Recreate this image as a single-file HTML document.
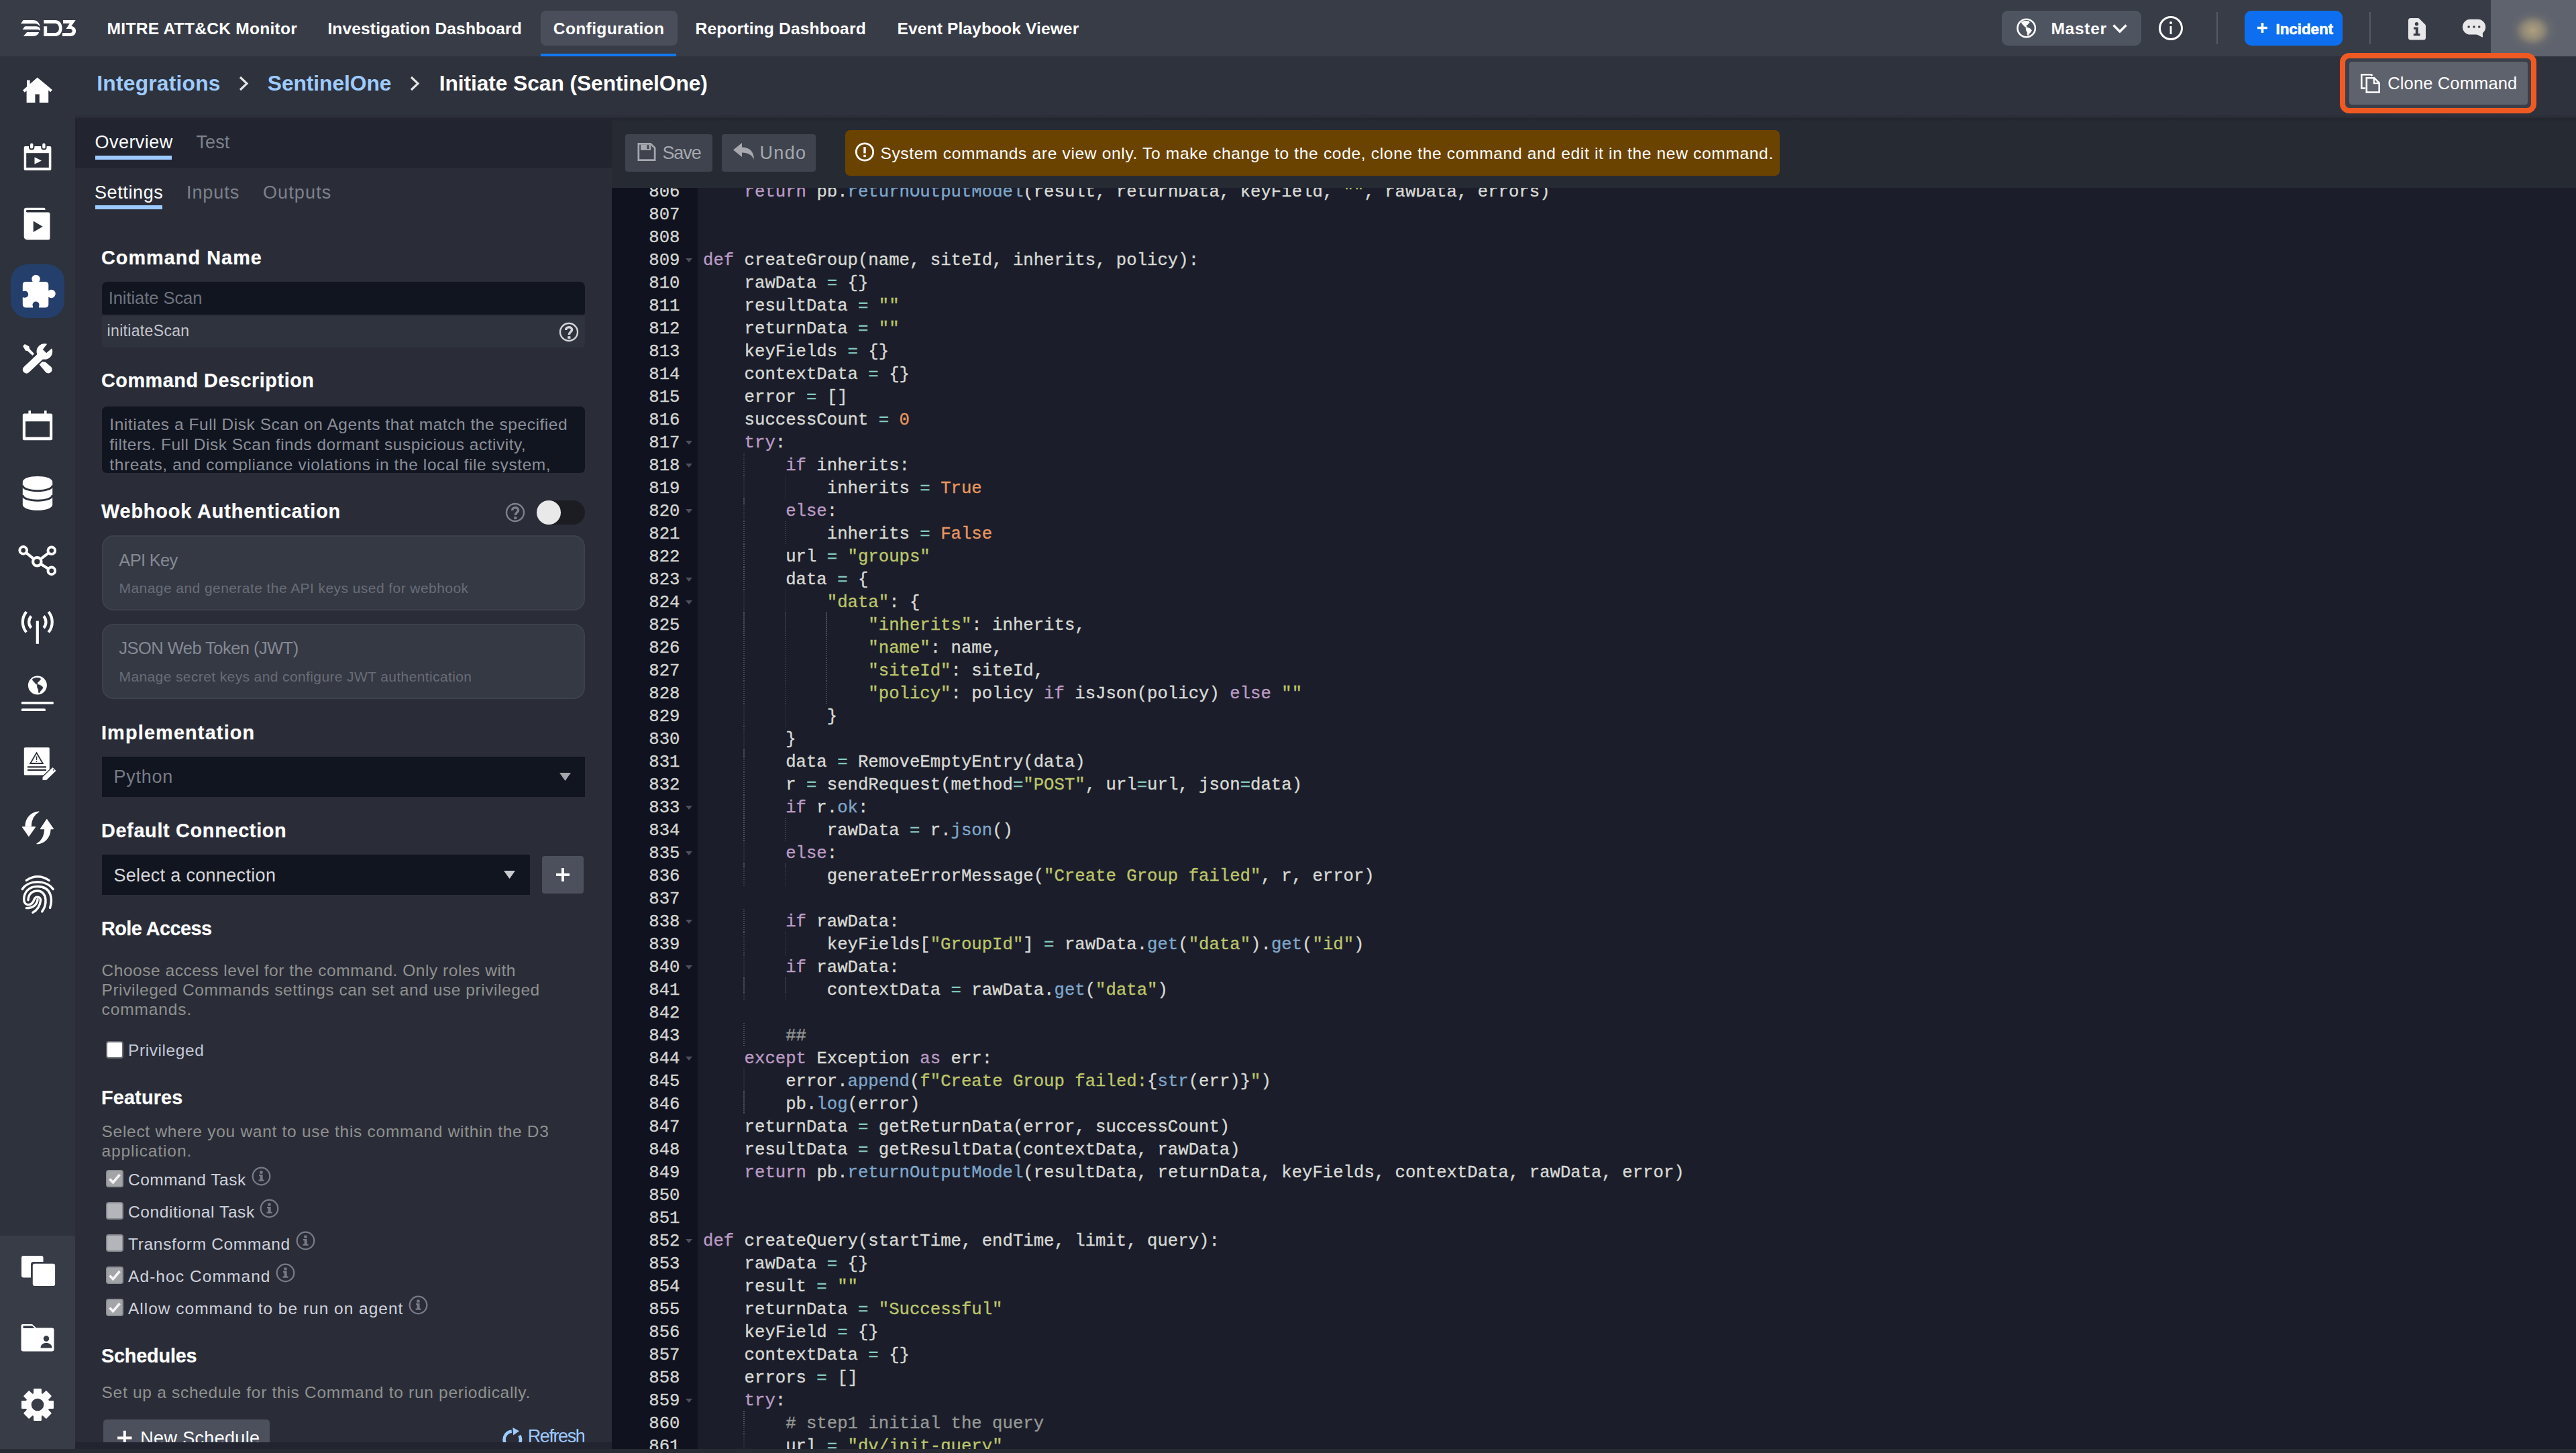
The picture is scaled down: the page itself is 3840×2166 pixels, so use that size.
<!DOCTYPE html>
<html lang="en"><head><meta charset="utf-8"><title>Initiate Scan (SentinelOne) - D3</title>
<style>
html,body{margin:0;padding:0;width:3840px;height:2166px;overflow:hidden;background:#2e323c}
body{position:relative;font-family:'Liberation Sans',sans-serif}
.a{position:absolute}
.t{position:absolute;white-space:pre;line-height:1;font-family:'Liberation Sans',sans-serif}

#ed{position:absolute;left:912px;top:280px;width:2928px;height:1880px;overflow:hidden;font-family:'Liberation Mono',monospace;font-size:25.66px;color:#d8d9d5;-webkit-text-stroke:0.35px}
.ln{position:absolute;left:0;width:2928px;height:34px;line-height:34px;white-space:pre}
.ln b{position:absolute;left:0;width:101.500px;text-align:right;font-weight:400;color:#d4d5d1}
.ln code{position:absolute;left:136px;font-family:inherit;font-size:inherit}
#ed .fd{position:absolute;left:110px;top:13px;width:0;height:0;border-left:5px solid transparent;border-right:5px solid transparent;border-top:6px solid #4e515c}
.ig{position:absolute;top:-2.800px;width:1.500px;height:34px;background:repeating-linear-gradient(#4a4d57 0 1.500px,transparent 1.500px 3px)}
.k{color:#bb9ac4}.s{color:#bdc56a}.n{color:#e8965f}.f{color:#7fa6cb}.o{color:#86c9be}.c{color:#969896}

</style></head><body>
<div class="a" style="left:0px;top:0px;width:3840px;height:84px;background:#383c47;"></div><div class="a" style="left:0px;top:84px;width:3840px;height:92px;background:#2e323c;"></div><div class="a" style="left:0px;top:176px;width:112px;height:1990px;background:#2e323c;"></div><div class="a" style="left:0px;top:1842px;width:112px;height:318px;background:#383c47;"></div><div class="a" style="left:112px;top:176px;width:800px;height:74px;background:#222530;"></div><div class="a" style="left:112px;top:250px;width:800px;height:1900px;background:#2a2d38;"></div><div class="a" style="left:112px;top:2150px;width:3728px;height:10px;background:#222530;"></div><div class="a" style="left:912px;top:176px;width:2928px;height:104px;background:#262a33;"></div><div class="a" style="left:912px;top:280px;width:128px;height:1880px;background:#10131f;"></div><div class="a" style="left:1040px;top:280px;width:2800px;height:1880px;background:#1b1e2a;"></div><div class="a" style="left:0px;top:2160px;width:3840px;height:6px;background:#272b34;"></div><div class="a" style="left:112px;top:170px;width:3728px;height:6px;background:linear-gradient(rgba(0,0,0,0),rgba(0,0,0,.13))"></div><div class="a" style="left:912px;top:176px;width:2928px;height:5px;background:linear-gradient(rgba(0,0,0,.12),rgba(0,0,0,0))"></div><svg class="a" style="left:28px;top:28px;" width="88" height="28" viewBox="28 28 88 28"><g fill="#fff"><path d="M34.700 30H49.900C55 30 59 34 59.700 39.600 57.500 36.500 55 35.200 52.500 35.200H30.900z"/><path d="M37.100 39.200H52.500C56.500 39.200 59.500 40.500 59.900 43.300L59.300 45.700C58 44.500 56.500 44.100 54.200 44.100H33.500z"/><path d="M40.100 48H58.200C57 51.500 54 53.900 49.900 53.900H34.900z"/><path d="M65.300 30H82C89 30 92.600 35 92.600 42S89 53.900 82 53.900H65.300V39.200H70.200V49H81.500C85.500 49 87.900 46.500 87.900 42S85.500 34.900 81.500 34.900H65.300z"/><path d="M94.100 30H112.700L106.500 38.800C111 40 113.100 42.500 113.100 46 113.100 51 110 53.900 105 53.900H93V49H104.500C106.800 49 107.800 47.800 107.800 46S106.500 42.900 104.500 42.900H98.400L103.800 34.900H94.100z"/></g></svg><div class="a" style="left:806px;top:16px;width:204px;height:52px;background:#4a4e5a;border-radius:8px;"></div><div class="a" style="left:806px;top:80px;width:202px;height:4px;background:#1079f0;"></div><div class="a" style="left:2984px;top:16px;width:208px;height:52px;background:#4f5461;border-radius:9px;"></div><svg class="a" style="left:3148px;top:34px;" width="24" height="16" viewBox="0 0 24 16"><path d="M2.500 3.500 12 13l9.500-9.500" fill="none" stroke="#fff" stroke-width="3.400"/></svg><svg class="a" style="left:3216px;top:22px;" width="40" height="40" viewBox="0 0 40 40"><circle cx="20" cy="20" r="16.500" fill="none" stroke="#fff" stroke-width="3"/><rect x="18.600" y="17" width="2.800" height="12" fill="#fff"/><circle cx="20" cy="12" r="2" fill="#fff"/></svg><div class="a" style="left:3304px;top:18px;width:2px;height:48px;background:#545968;"></div><div class="a" style="left:3346px;top:16px;width:146px;height:52px;background:#0d6ff0;border-radius:10px;"></div><svg class="a" style="left:3364px;top:33px;" width="17" height="17" viewBox="0 0 17 17"><path d="M8.500 1v15M1 8.500h15" stroke="#fff" stroke-width="3.600"/></svg><div class="a" style="left:3532px;top:18px;width:2px;height:48px;background:#545968;"></div><div class="a" style="left:3713px;top:0px;width:127px;height:84px;background:#5f636d;overflow:hidden"></div><div class="a" style="left:3725px;top:0px;width:100px;height:84px;background:radial-gradient(ellipse 36px 31px at 50.500% 54%,rgba(178,162,128,.95) 0%,rgba(164,151,123,.75) 38%,rgba(122,120,116,.3) 72%,rgba(95,99,109,0) 100%)"></div><svg class="a" style="left:354.8px;top:112px;" width="18.0" height="25" viewBox="0 0 18.0 25"><path d="M3 3l10 9.500L3 22" fill="none" stroke="#e4e4e6" stroke-width="3.200"/></svg><svg class="a" style="left:609.5px;top:112px;" width="18.0" height="25" viewBox="0 0 18.0 25"><path d="M3 3l10 9.500L3 22" fill="none" stroke="#e4e4e6" stroke-width="3.200"/></svg><div class="a" style="left:3488px;top:79px;width:293px;height:90px;box-sizing:border-box;border:8.500px solid #f05a22;border-radius:14px;background:#3c3f4a"></div><div class="a" style="left:3502px;top:92px;width:266px;height:64px;background:#5e626d;border-radius:4px;"></div><div class="a" style="left:142px;top:232px;width:114px;height:6px;background:#9ecbff;"></div><div class="a" style="left:142px;top:306px;width:100px;height:6px;background:#9ecbff;"></div><div class="a" style="left:152px;top:420px;width:720px;height:49px;background:#111520;border-radius:8px 8px 3px 3px;"></div><div class="a" style="left:152px;top:471px;width:720px;height:47px;background:#2f333e;border-radius:2px 2px 6px 6px;"></div><svg class="a" style="left:833px;top:480px;" width="30" height="30" viewBox="0 0 30 30"><circle cx="15" cy="15" r="13" fill="none" stroke="#d4d5d9" stroke-width="2.400"/><path d="M10.600 12c0-2.700 2-4.200 4.500-4.200s4.500 1.500 4.500 3.800c0 3.200-4.300 3.300-4.300 7.400" fill="none" stroke="#d4d5d9" stroke-width="3.500"/><rect x="13.200" y="21.200" width="4.200" height="3.700" fill="#d4d5d9"/></svg><div class="a" style="left:152px;top:606px;width:720px;height:99px;background:#111520;border-radius:7px;overflow:hidden"></div><svg class="a" style="left:753px;top:749px;" width="30" height="30" viewBox="0 0 30 30"><circle cx="15" cy="15" r="13" fill="none" stroke="#7d818c" stroke-width="2.400"/><path d="M10.600 12c0-2.700 2-4.200 4.500-4.200s4.500 1.500 4.500 3.800c0 3.200-4.300 3.300-4.300 7.400" fill="none" stroke="#7d818c" stroke-width="3.500"/><rect x="13.200" y="21.200" width="4.200" height="3.700" fill="#7d818c"/></svg><div class="a" style="left:800px;top:746px;width:72px;height:36px;background:#1b1d23;border-radius:18px;"></div><div class="a" style="left:800px;top:746px;width:36px;height:36px;border-radius:18px;background:#e9e9ea"></div><div class="a" style="left:152px;top:798px;width:720px;height:112px;box-sizing:border-box;border:2px solid #3d414c;border-radius:17px;background:#353944"></div><div class="a" style="left:152px;top:930px;width:720px;height:112px;box-sizing:border-box;border:2px solid #3d414c;border-radius:17px;background:#353944"></div><div class="a" style="left:152px;top:1128px;width:720px;height:60px;background:#111520;"></div><svg class="a" style="left:834px;top:1152px;" width="17" height="12" viewBox="0 0 17 12"><path d="M0 0h17L8.500 12z" fill="#a4a6ab"/></svg><div class="a" style="left:152px;top:1274px;width:638px;height:60px;background:#111520;"></div><svg class="a" style="left:751px;top:1298px;" width="17" height="12" viewBox="0 0 17 12"><path d="M0 0h17L8.500 12z" fill="#c9cacd"/></svg><div class="a" style="left:808px;top:1276px;width:62px;height:56px;background:#4c505c;border-radius:4px;"></div><svg class="a" style="left:828px;top:1293px;" width="22" height="22" viewBox="0 0 22 22"><path d="M11 1v20M1 11h20" stroke="#fff" stroke-width="4"/></svg><div class="a" style="left:158px;top:1552px;width:26px;height:26px;box-sizing:border-box;border:2px solid #6b6d75;border-radius:4px;background:#fff"></div><div class="a" style="left:158px;top:1744px;width:26px;height:26px;box-sizing:border-box;border:2px solid #8e8f94;border-radius:4px;background:#a3a4a8"></div><svg class="a" style="left:158px;top:1744px;" width="26" height="26" viewBox="0 0 26 26"><path d="M5.500 13.500l5 5.200L20.500 7" fill="none" stroke="#f4f4f5" stroke-width="3.600"/></svg><svg class="a" style="left:374.5px;top:1739.4px;" width="29.0" height="29.0" viewBox="0 0 29.0 29.0"><circle cx="14.500" cy="14.500" r="12.800" fill="none" stroke="#777b88" stroke-width="2.300"/><path d="M11 12h5.600v7.400h2v2.300h-8v-2.300h2.100v-5.100H11z" fill="#777b88"/><rect x="12.300" y="6.600" width="4.300" height="4.100" rx="1" fill="#777b88"/></svg><div class="a" style="left:158px;top:1792px;width:26px;height:26px;box-sizing:border-box;border:2px solid #8a8b91;border-radius:4px;background:#b4b5ba"></div><svg class="a" style="left:387.0px;top:1787.4px;" width="29.0" height="29.0" viewBox="0 0 29.0 29.0"><circle cx="14.500" cy="14.500" r="12.800" fill="none" stroke="#777b88" stroke-width="2.300"/><path d="M11 12h5.600v7.400h2v2.300h-8v-2.300h2.100v-5.100H11z" fill="#777b88"/><rect x="12.300" y="6.600" width="4.300" height="4.100" rx="1" fill="#777b88"/></svg><div class="a" style="left:158px;top:1840px;width:26px;height:26px;box-sizing:border-box;border:2px solid #8a8b91;border-radius:4px;background:#b4b5ba"></div><svg class="a" style="left:440.5px;top:1835.4px;" width="29.0" height="29.0" viewBox="0 0 29.0 29.0"><circle cx="14.500" cy="14.500" r="12.800" fill="none" stroke="#777b88" stroke-width="2.300"/><path d="M11 12h5.600v7.400h2v2.300h-8v-2.300h2.100v-5.100H11z" fill="#777b88"/><rect x="12.300" y="6.600" width="4.300" height="4.100" rx="1" fill="#777b88"/></svg><div class="a" style="left:158px;top:1888px;width:26px;height:26px;box-sizing:border-box;border:2px solid #8e8f94;border-radius:4px;background:#a3a4a8"></div><svg class="a" style="left:158px;top:1888px;" width="26" height="26" viewBox="0 0 26 26"><path d="M5.500 13.500l5 5.200L20.500 7" fill="none" stroke="#f4f4f5" stroke-width="3.600"/></svg><svg class="a" style="left:410.8px;top:1883.4px;" width="29.0" height="29.0" viewBox="0 0 29.0 29.0"><circle cx="14.500" cy="14.500" r="12.800" fill="none" stroke="#777b88" stroke-width="2.300"/><path d="M11 12h5.600v7.400h2v2.300h-8v-2.300h2.100v-5.100H11z" fill="#777b88"/><rect x="12.300" y="6.600" width="4.300" height="4.100" rx="1" fill="#777b88"/></svg><div class="a" style="left:158px;top:1936px;width:26px;height:26px;box-sizing:border-box;border:2px solid #8e8f94;border-radius:4px;background:#a3a4a8"></div><svg class="a" style="left:158px;top:1936px;" width="26" height="26" viewBox="0 0 26 26"><path d="M5.500 13.500l5 5.200L20.500 7" fill="none" stroke="#f4f4f5" stroke-width="3.600"/></svg><svg class="a" style="left:608.7px;top:1931.4px;" width="29.0" height="29.0" viewBox="0 0 29.0 29.0"><circle cx="14.500" cy="14.500" r="12.800" fill="none" stroke="#777b88" stroke-width="2.300"/><path d="M11 12h5.600v7.400h2v2.300h-8v-2.300h2.100v-5.100H11z" fill="#777b88"/><rect x="12.300" y="6.600" width="4.300" height="4.100" rx="1" fill="#777b88"/></svg><svg class="a" style="left:112px;top:2100px;" width="800" height="50" viewBox="112 2100 800 50"><rect x="154" y="2116" width="248" height="60" rx="5" fill="#4c505c"/><path d="M185.800 2132.700v21.400M175.100 2143.400h21.400" stroke="#fff" stroke-width="4"/><g transform="translate(763.800 2145.900)"><path d="M-1.060 -12.150A12.200 12.200 0 1 0 10.570 -6.100" fill="none" stroke="#9ecbff" stroke-width="4.600"/><path d="M0.500 -18 10.300 -12.600 1.400 -6.500z" fill="#9ecbff"/></g></svg><div class="a" style="left:932px;top:200px;width:130px;height:56px;background:#3e434e;border-radius:4px;"></div><svg class="a" style="left:950px;top:213px;" width="28" height="27" viewBox="0 0 30 30"><path d="M1.500 1.500h20l7 7v20h-27z" fill="none" stroke="#a6a8ae" stroke-width="3"/><path d="M5 3h17v9H5z" fill="#a6a8ae"/><rect x="15.500" y="3.500" width="3.400" height="6.500" fill="#3e434e"/></svg><div class="a" style="left:1076px;top:200px;width:140px;height:56px;background:#3e434e;border-radius:4px;"></div><svg class="a" style="left:1093px;top:213px;" width="32" height="26" viewBox="0 0 32 26"><path d="M0 10.500 13 0v6.500c11 0 18 6 18 18.500C28 18 22 14.500 13 14.500V21z" fill="#a6a8ae"/></svg><div class="a" style="left:1260px;top:194px;width:1393px;height:68px;background:#6b4300;border-radius:7px;"></div><svg class="a" style="left:1273px;top:210px;" width="32" height="32" viewBox="0 0 32 32"><circle cx="16" cy="16.500" r="12.700" fill="none" stroke="#fff" stroke-width="2.800"/><rect x="14.300" y="9" width="3.400" height="9.500" fill="#fff"/><rect x="14.300" y="20.800" width="3.400" height="3.400" fill="#fff"/></svg><svg class="a" style="left:33px;top:114px;" width="46" height="40" viewBox="0 0 46 40"><g fill="#fff"><path d="M1 20.500 22.700 1.500 45 20l-2.800 3.200L22.700 6.800 3.800 23.700z"/><path d="M6.600 20 22.700 5.800 39.200 20v19H25.800V26.500h-6.400V39H6.600z"/><rect x="7" y="5.500" width="4.600" height="11"/></g></svg><svg class="a" style="left:35px;top:213px;" width="43" height="42" viewBox="0 0 43 42"><g><rect x="0.700" y="5" width="40.700" height="36" rx="2" fill="#fff"/><rect x="4.200" y="15.200" width="33.600" height="21.600" fill="#2e323c"/><path d="M16.500 21.200v10.600l10.500-5.300z" fill="#fff"/><rect x="8" y="0" width="8.400" height="10.500" rx="4" fill="#2e323c"/><rect x="26.200" y="0" width="8.400" height="10.500" rx="4" fill="#2e323c"/><rect x="10" y="0.500" width="4.400" height="8" rx="2.200" fill="#fff"/><rect x="28.200" y="0.500" width="4.400" height="8" rx="2.200" fill="#fff"/></g></svg><svg class="a" style="left:35px;top:309px;" width="41" height="50" viewBox="0 0 41 50"><g><path d="M4 .8h26.500a2 2 0 0 1 2 2V4H5.500a1.600 1.600 0 0 0 0 3.400H37a2.500 2.500 0 0 1 2.500 2.500v36a2.500 2.500 0 0 1-2.500 2.500H5.200A4.500 4.500 0 0 1 .7 44V4.500A3.500 3.500 0 0 1 4 .8z" fill="#fff"/><path d="M14.700 20.500v16.500l14-8.300z" fill="#2e323c"/></g></svg><div class="a" style="left:16px;top:394px;width:80px;height:80px;background:#243f6b;border-radius:25px;"></div><svg class="a" style="left:33px;top:409px;" width="50" height="50" viewBox="0 0 50 50"><g fill="#fff"><rect x=".8" y="11" width="38.500" height="38.500" rx="4.500"/><circle cx="20.500" cy="7" r="6.200"/><rect x="15.800" y="7" width="9.400" height="6"/><circle cx="43.500" cy="29" r="6.200"/><rect x="38" y="24.300" width="6" height="9.400"/></g><g fill="#243f6b"><circle cx="4.200" cy="29.800" r="5"/><rect x="0" y="25.300" width="4" height="9"/><circle cx="20.500" cy="45.600" r="5"/><rect x="16" y="46" width="9" height="4"/></g></svg><svg class="a" style="left:16px;top:494px;" width="80" height="80" viewBox="0 0 1453 1453"><g fill="#fff"><path d="M425 1035 790 690" stroke="#fff" stroke-width="205" stroke-linecap="round"/><circle cx="915" cy="545" r="215"/><path d="M1010 310 868 490 965 587 1150 425 1230 280z" fill="#2e323c"/><path d="M380 345 500 410 510 470 635 605 590 655 450 525 400 520 330 400z"/><path d="M775 900 850 820 940 830 1090 960A100 100 0 0 1 945 1105z"/></g></svg><svg class="a" style="left:33px;top:611px;" width="46" height="46" viewBox="0 0 46 46"><rect x=".8" y="5.500" width="44.400" height="39.700" rx="2.500" fill="#fff"/><rect x="5" y="17.200" width="36" height="23.300" fill="#2e323c"/><rect x="9.400" y="1" width="3.600" height="6" fill="#fff"/><rect x="33" y="1" width="3.600" height="6" fill="#fff"/></svg><svg class="a" style="left:33px;top:709px;" width="46" height="53" viewBox="0 0 46 53"><g fill="#fff"><path d="M.8 9.300C.8 4.500 10.700 1 23 1s22.200 3.500 22.200 8.300v34.200c0 4.800-9.900 8.300-22.200 8.300S.8 48.300.8 43.500z"/></g><g fill="none" stroke="#2e323c" stroke-width="3"><path d="M.8 14.500c0 4.800 9.900 8.300 22.200 8.300s22.200-3.500 22.200-8.300"/><path d="M.8 29c0 4.800 9.900 8.300 22.200 8.300S45.200 33.800 45.200 29"/></g></svg><svg class="a" style="left:26px;top:811px;" width="60" height="50" viewBox="0 0 60 50"><g stroke="#fff" fill="none"><path d="M8.700 9.400 29.300 26.300 50.800 9.800M29.300 26.300l21.500 13.600" stroke-width="4.200"/><circle cx="8.700" cy="9.400" r="5.300" stroke-width="4" fill="#2e323c"/><circle cx="50.800" cy="9.800" r="5.300" stroke-width="4" fill="#2e323c"/><circle cx="50.800" cy="39.900" r="5.300" stroke-width="4" fill="#2e323c"/><circle cx="29.300" cy="26.300" r="6.200" stroke-width="4.200" fill="#2e323c"/></g></svg><svg class="a" style="left:30px;top:908px;" width="52" height="54" viewBox="0 0 52 54"><g fill="none" stroke="#fff" stroke-width="4.200"><path d="M25.800 17.600v34.200" stroke-width="4.200"/><path d="M16.500 10.500a13 13 0 0 0 0 17.500"/><path d="M35.100 10.500a13 13 0 0 1 0 17.500"/><path d="M9.300 4a24 24 0 0 0 0 30.500"/><path d="M42.300 4a24 24 0 0 1 0 30.500"/></g></svg><svg class="a" style="left:30px;top:1006px;" width="52" height="56" viewBox="0 0 52 56"><circle cx="25.900" cy="15.600" r="14" fill="#fff"/><path d="M18.4 6.3 23.2 4.5 29.3 4.9 30.8 6.3 28.7 8.8 26.9 10.7 25.0 11.9 26.2 13.1 25.4 14.4 23.2 13.1 21.3 10.7 19.2 8.8zM25.9 14.4 28.7 15.0 32.4 16.9 34.0 19.3 32.4 21.8 30.0 24.3 28.7 26.8 27.5 26.2 27.5 22.4 25.9 19.3 25.4 16.2z" fill="#2e323c" stroke="#2e323c" stroke-width="0.800" stroke-linejoin="round"/><rect x="1.700" y="40" width="48.300" height="3.800" rx="1.900" fill="#fff"/><rect x="1.700" y="50.300" width="36.400" height="3.800" rx="1.900" fill="#fff"/></svg><svg class="a" style="left:34px;top:1113px;" width="50" height="50" viewBox="0 0 50 50"><rect x="1.800" y="1.200" width="38" height="41.300" rx="1.500" fill="#fff"/><path d="M20.500 9.200 29.800 25H11.200z" fill="none" stroke="#2e323c" stroke-width="1.800"/><rect x="19.800" y="14.500" width="1.500" height="5.500" fill="#2e323c"/><rect x="19.800" y="21.300" width="1.500" height="1.600" fill="#2e323c"/><path d="M7 30.300h28M7 34.900h28" stroke="#2e323c" stroke-width="2.300"/><path d="M29.500 45.500 44.500 31l5 5L34.500 50.500h-5z" fill="#fff" stroke="#2e323c" stroke-width="2.600"/><path d="M29.500 45.500 44.500 31l5 5L34.500 50.500h-5z" fill="#fff"/><circle cx="45.700" cy="34.700" r="1" fill="#2e323c"/></svg><svg class="a" style="left:30px;top:1208px;" width="54" height="52" viewBox="30 1208 54 52"><g fill="#fff" stroke="#fff" stroke-width="1.200" stroke-linejoin="round"><path d="M58 1210.100C48 1210.500 38.500 1218 37.900 1231.600H46.200C46.500 1222 51 1214 58 1210.100z"/><path d="M33.500 1232.800H52.400L42.900 1246.400z"/><path d="M69.800 1221.500 79.400 1235.600H60.500z"/><path d="M55 1257.800C65 1257.500 74.500 1250 75.100 1236H66.800C66.500 1246 62 1254 55 1257.800z"/></g></svg><svg class="a" style="left:20px;top:1295px;" width="80" height="80" viewBox="0 0 1453 1453"><g fill="none" stroke="#fff" stroke-width="62" stroke-linecap="round"><path d="M350 315Q655 115 965 315"/><path d="M240 555C400 295 900 295 1075 555"/><path d="M990 1060C1060 850 1050 480 655 480 400 480 285 650 285 830 285 930 340 975 410 975 500 975 540 900 565 830 580 780 610 765 650 765 700 765 740 800 735 860 725 1000 640 1130 525 1185"/><path d="M775 1160C850 1060 880 940 870 830 860 690 770 600 655 600 500 600 400 700 400 850"/><path d="M655 830C650 900 620 960 570 1000 510 1045 430 1065 350 1065"/></g></svg><svg class="a" style="left:31px;top:1871px;" width="53" height="47" viewBox="0 0 53 47"><rect x="1" y="1" width="32.500" height="32.500" rx="3" fill="#fff"/><rect x="15" y="10" width="37.500" height="37.500" rx="4" fill="#383c47"/><rect x="17.800" y="12.800" width="33.300" height="33.300" rx="3" fill="#fff"/></svg><svg class="a" style="left:31px;top:1973px;" width="51" height="43" viewBox="0 0 51 43"><path d="M3 1h14l6 5.500h23.500a3 3 0 0 1 3 3v29a3 3 0 0 1-3 3H3.500a3 3 0 0 1-3-3V3.500A2.500 2.500 0 0 1 3 1z" fill="#fff"/><path d="M3.500 7h17l-3.500-3.500H3.500z" fill="#383c47"/><circle cx="38" cy="22.500" r="4.200" fill="#383c47"/><path d="M29.500 36.500c0-5 3.500-7.500 8.500-7.500s8.500 2.500 8.500 7.500z" fill="#383c47"/></svg><svg class="a" style="left:28px;top:2066px;" width="56" height="56" viewBox="0 0 56 56"><path d="M23.0 11.8 L23.1 5.0 L32.9 5.0 L33.0 11.8 L35.9 13.0 L40.8 8.3 L47.7 15.2 L43.0 20.1 L44.2 23.0 L51.0 23.1 L51.0 32.9 L44.2 33.0 L43.0 35.9 L47.7 40.8 L40.8 47.7 L35.9 43.0 L33.0 44.2 L32.9 51.0 L23.1 51.0 L23.0 44.2 L20.1 43.0 L15.2 47.7 L8.3 40.8 L13.0 35.9 L11.8 33.0 L5.0 32.9 L5.0 23.1 L11.8 23.0 L13.0 20.1 L8.3 15.2 L15.2 8.3 L20.1 13.0Z" fill="#fff" stroke="#fff" stroke-width="2" stroke-linejoin="round"/><circle cx="28" cy="28" r="9.3" fill="#383c47"/></svg><svg class="a" style="left:3005px;top:27px;" width="32" height="32" viewBox="0 0 32 32"><circle cx="15.700" cy="15" r="13.200" fill="none" stroke="#fff" stroke-width="2.600"/><g transform="translate(15.700 15) scale(0.960) translate(-25.900 -15.600)"><path d="M18.4 6.3 23.2 4.5 29.3 4.9 30.8 6.3 28.7 8.8 26.9 10.7 25.0 11.9 26.2 13.1 25.4 14.4 23.2 13.1 21.3 10.7 19.2 8.8zM25.9 14.4 28.7 15.0 32.4 16.9 34.0 19.3 32.4 21.8 30.0 24.3 28.7 26.8 27.5 26.2 27.5 22.4 25.9 19.3 25.4 16.2z" fill="#fff" stroke="#fff" stroke-width="0.800" stroke-linejoin="round"/></g></svg><svg class="a" style="left:3589px;top:26px;" width="29" height="34" viewBox="0 0 29 34"><path d="M4.500 1H15.500a3 3 0 0 1 2.100.900l8.500 8.500a3 3 0 0 1 .900 2.100V30a3.500 3.500 0 0 1-3.500 3.500h-19A3.500 3.500 0 0 1 1 30V4.500A3.500 3.500 0 0 1 4.500 1z" fill="#e8e8ea"/><circle cx="13.500" cy="9.700" r="2.700" fill="#383c47"/><path d="M9 14.500h6.800v9.500h2.700v3.200H8.800V24h3v-6.300H9z" fill="#383c47"/></svg><svg class="a" style="left:3670px;top:28px;" width="36" height="28" viewBox="0 0 36 28"><rect x=".900" y=".800" width="34.300" height="22.800" rx="11.400" fill="#e8e8ea"/><path d="M20.500 22.500 30.200 27.400c.5.200.9-.100.8-.700L30.800 17z" fill="#e8e8ea"/><circle cx="10.100" cy="12" r="1.800" fill="#383c47"/><circle cx="18" cy="12" r="1.800" fill="#383c47"/><circle cx="25.700" cy="12" r="1.800" fill="#383c47"/></svg><svg class="a" style="left:3518px;top:109px;" width="31" height="30" viewBox="0 0 31 30"><g fill="none" stroke="#fff" stroke-width="2.600"><path d="M8 22.500H2.300V2.300h14.500L18.500 4"/><path d="M9.800 7.300h11.500l7.400 7.400v13.800H9.800z" fill="#5e626d"/><path d="M20.800 7.500v7.700h7.700" stroke-width="2.200"/></g></svg>
<div id="ed"><div class="ln" style="top:-9.8px"><b>806</b><code>    <span class="k">return</span> pb.<span class="f">returnOutputModel</span>(result, returnData, keyField, <span class="s">""</span>, rawData, errors)</code></div>
<div class="ln" style="top:24.2px"><b>807</b><code></code></div>
<div class="ln" style="top:58.2px"><b>808</b><code></code></div>
<div class="ln" style="top:92.2px"><b>809</b><i class="fd"></i><code><span class="k">def</span> createGroup(name, siteId, inherits, policy):</code></div>
<div class="ln" style="top:126.2px"><b>810</b><code>    rawData <span class="o">=</span> {}</code></div>
<div class="ln" style="top:160.2px"><b>811</b><code>    resultData <span class="o">=</span> <span class="s">""</span></code></div>
<div class="ln" style="top:194.2px"><b>812</b><code>    returnData <span class="o">=</span> <span class="s">""</span></code></div>
<div class="ln" style="top:228.2px"><b>813</b><code>    keyFields <span class="o">=</span> {}</code></div>
<div class="ln" style="top:262.2px"><b>814</b><code>    contextData <span class="o">=</span> {}</code></div>
<div class="ln" style="top:296.2px"><b>815</b><code>    error <span class="o">=</span> []</code></div>
<div class="ln" style="top:330.2px"><b>816</b><code>    successCount <span class="o">=</span> <span class="n">0</span></code></div>
<div class="ln" style="top:364.2px"><b>817</b><i class="fd"></i><code>    <span class="k">try</span>:</code></div>
<div class="ln" style="top:398.2px"><b>818</b><i class="fd"></i><i class="ig" style="left:196.1px"></i><code>        <span class="k">if</span> inherits:</code></div>
<div class="ln" style="top:432.2px"><b>819</b><i class="ig" style="left:196.1px"></i><i class="ig" style="left:257.7px"></i><code>            inherits <span class="o">=</span> <span class="n">True</span></code></div>
<div class="ln" style="top:466.2px"><b>820</b><i class="fd"></i><i class="ig" style="left:196.1px"></i><code>        <span class="k">else</span>:</code></div>
<div class="ln" style="top:500.2px"><b>821</b><i class="ig" style="left:196.1px"></i><i class="ig" style="left:257.7px"></i><code>            inherits <span class="o">=</span> <span class="n">False</span></code></div>
<div class="ln" style="top:534.2px"><b>822</b><i class="ig" style="left:196.1px"></i><code>        url <span class="o">=</span> <span class="s">"groups"</span></code></div>
<div class="ln" style="top:568.2px"><b>823</b><i class="fd"></i><i class="ig" style="left:196.1px"></i><code>        data <span class="o">=</span> {</code></div>
<div class="ln" style="top:602.2px"><b>824</b><i class="fd"></i><i class="ig" style="left:196.1px"></i><i class="ig" style="left:257.7px"></i><code>            <span class="s">"data"</span>: {</code></div>
<div class="ln" style="top:636.2px"><b>825</b><i class="ig" style="left:196.1px"></i><i class="ig" style="left:257.7px"></i><i class="ig" style="left:319.3px"></i><code>                <span class="s">"inherits"</span>: inherits,</code></div>
<div class="ln" style="top:670.2px"><b>826</b><i class="ig" style="left:196.1px"></i><i class="ig" style="left:257.7px"></i><i class="ig" style="left:319.3px"></i><code>                <span class="s">"name"</span>: name,</code></div>
<div class="ln" style="top:704.2px"><b>827</b><i class="ig" style="left:196.1px"></i><i class="ig" style="left:257.7px"></i><i class="ig" style="left:319.3px"></i><code>                <span class="s">"siteId"</span>: siteId,</code></div>
<div class="ln" style="top:738.2px"><b>828</b><i class="ig" style="left:196.1px"></i><i class="ig" style="left:257.7px"></i><i class="ig" style="left:319.3px"></i><code>                <span class="s">"policy"</span>: policy <span class="k">if</span> isJson(policy) <span class="k">else</span> <span class="s">""</span></code></div>
<div class="ln" style="top:772.2px"><b>829</b><i class="ig" style="left:196.1px"></i><i class="ig" style="left:257.7px"></i><code>            }</code></div>
<div class="ln" style="top:806.2px"><b>830</b><i class="ig" style="left:196.1px"></i><code>        }</code></div>
<div class="ln" style="top:840.2px"><b>831</b><i class="ig" style="left:196.1px"></i><code>        data <span class="o">=</span> RemoveEmptyEntry(data)</code></div>
<div class="ln" style="top:874.2px"><b>832</b><i class="ig" style="left:196.1px"></i><code>        r <span class="o">=</span> sendRequest(method<span class="o">=</span><span class="s">"POST"</span>, url<span class="o">=</span>url, json<span class="o">=</span>data)</code></div>
<div class="ln" style="top:908.2px"><b>833</b><i class="fd"></i><i class="ig" style="left:196.1px"></i><code>        <span class="k">if</span> r.<span class="f">ok</span>:</code></div>
<div class="ln" style="top:942.2px"><b>834</b><i class="ig" style="left:196.1px"></i><i class="ig" style="left:257.7px"></i><code>            rawData <span class="o">=</span> r.<span class="f">json</span>()</code></div>
<div class="ln" style="top:976.2px"><b>835</b><i class="fd"></i><i class="ig" style="left:196.1px"></i><code>        <span class="k">else</span>:</code></div>
<div class="ln" style="top:1010.2px"><b>836</b><i class="ig" style="left:196.1px"></i><i class="ig" style="left:257.7px"></i><code>            generateErrorMessage(<span class="s">"Create Group failed"</span>, r, error)</code></div>
<div class="ln" style="top:1044.2px"><b>837</b><code></code></div>
<div class="ln" style="top:1078.2px"><b>838</b><i class="fd"></i><i class="ig" style="left:196.1px"></i><code>        <span class="k">if</span> rawData:</code></div>
<div class="ln" style="top:1112.2px"><b>839</b><i class="ig" style="left:196.1px"></i><i class="ig" style="left:257.7px"></i><code>            keyFields[<span class="s">"GroupId"</span>] <span class="o">=</span> rawData.<span class="f">get</span>(<span class="s">"data"</span>).<span class="f">get</span>(<span class="s">"id"</span>)</code></div>
<div class="ln" style="top:1146.2px"><b>840</b><i class="fd"></i><i class="ig" style="left:196.1px"></i><code>        <span class="k">if</span> rawData:</code></div>
<div class="ln" style="top:1180.2px"><b>841</b><i class="ig" style="left:196.1px"></i><i class="ig" style="left:257.7px"></i><code>            contextData <span class="o">=</span> rawData.<span class="f">get</span>(<span class="s">"data"</span>)</code></div>
<div class="ln" style="top:1214.2px"><b>842</b><code></code></div>
<div class="ln" style="top:1248.2px"><b>843</b><i class="ig" style="left:196.1px"></i><code>        <span class="c">##</span></code></div>
<div class="ln" style="top:1282.2px"><b>844</b><i class="fd"></i><code>    <span class="k">except</span> Exception <span class="k">as</span> err:</code></div>
<div class="ln" style="top:1316.2px"><b>845</b><i class="ig" style="left:196.1px"></i><code>        error.<span class="f">append</span>(<span class="s">f"Create Group failed:</span>{<span class="f">str</span>(err)}<span class="s">"</span>)</code></div>
<div class="ln" style="top:1350.2px"><b>846</b><i class="ig" style="left:196.1px"></i><code>        pb.<span class="f">log</span>(error)</code></div>
<div class="ln" style="top:1384.2px"><b>847</b><code>    returnData <span class="o">=</span> getReturnData(error, successCount)</code></div>
<div class="ln" style="top:1418.2px"><b>848</b><code>    resultData <span class="o">=</span> getResultData(contextData, rawData)</code></div>
<div class="ln" style="top:1452.2px"><b>849</b><code>    <span class="k">return</span> pb.<span class="f">returnOutputModel</span>(resultData, returnData, keyFields, contextData, rawData, error)</code></div>
<div class="ln" style="top:1486.2px"><b>850</b><code></code></div>
<div class="ln" style="top:1520.2px"><b>851</b><code></code></div>
<div class="ln" style="top:1554.2px"><b>852</b><i class="fd"></i><code><span class="k">def</span> createQuery(startTime, endTime, limit, query):</code></div>
<div class="ln" style="top:1588.2px"><b>853</b><code>    rawData <span class="o">=</span> {}</code></div>
<div class="ln" style="top:1622.2px"><b>854</b><code>    result <span class="o">=</span> <span class="s">""</span></code></div>
<div class="ln" style="top:1656.2px"><b>855</b><code>    returnData <span class="o">=</span> <span class="s">"Successful"</span></code></div>
<div class="ln" style="top:1690.2px"><b>856</b><code>    keyField <span class="o">=</span> {}</code></div>
<div class="ln" style="top:1724.2px"><b>857</b><code>    contextData <span class="o">=</span> {}</code></div>
<div class="ln" style="top:1758.2px"><b>858</b><code>    errors <span class="o">=</span> []</code></div>
<div class="ln" style="top:1792.2px"><b>859</b><i class="fd"></i><code>    <span class="k">try</span>:</code></div>
<div class="ln" style="top:1826.2px"><b>860</b><i class="ig" style="left:196.1px"></i><code>        <span class="c"># step1 initial the query</span></code></div>
<div class="ln" style="top:1860.2px"><b>861</b><i class="ig" style="left:196.1px"></i><code>        url <span class="o">=</span> <span class="s">"dv/init-query"</span></code></div></div>
<span class="t" style="left:159.60px;top:31.20px;font-size:24.6px;color:#fff;font-weight:700;letter-spacing:0.238px;">MITRE ATT&amp;CK Monitor</span><span class="t" style="left:488.40px;top:31.20px;font-size:24.6px;color:#fff;font-weight:700;letter-spacing:0.110px;">Investigation Dashboard</span><span class="t" style="left:824.80px;top:31.20px;font-size:24.6px;color:#fff;font-weight:700;letter-spacing:0.334px;">Configuration</span><span class="t" style="left:1036.50px;top:31.20px;font-size:24.6px;color:#fff;font-weight:700;letter-spacing:0.155px;">Reporting Dashboard</span><span class="t" style="left:1337.60px;top:31.20px;font-size:24.6px;color:#fff;font-weight:700;letter-spacing:0.089px;">Event Playbook Viewer</span><span class="t" style="left:3057.40px;top:31.40px;font-size:24.6px;color:#fff;font-weight:700;letter-spacing:0.687px;">Master</span><span class="t" style="left:3392.59px;top:32.85px;font-size:22.5px;color:#fff;font-weight:700;letter-spacing:-0.106px;-webkit-text-stroke:0.6px #fff;">Incident</span><span class="t" style="left:144.31px;top:109.10px;font-size:31.8px;color:#9ecbff;font-weight:700;letter-spacing:0.208px;">Integrations</span><span class="t" style="left:398.81px;top:109.10px;font-size:31.8px;color:#9ecbff;font-weight:700;letter-spacing:-0.087px;">SentinelOne</span><span class="t" style="left:654.71px;top:109.10px;font-size:31.8px;color:#fff;font-weight:700;letter-spacing:-0.099px;">Initiate Scan (SentinelOne)</span><span class="t" style="left:3559.27px;top:111.65px;font-size:25.5px;color:#fff;letter-spacing:0.138px;">Clone Command</span><span class="t" style="left:141.41px;top:199.20px;font-size:27px;color:#fff;letter-spacing:0.486px;">Overview</span><span class="t" style="left:292.41px;top:199.20px;font-size:27px;color:#7d818c;letter-spacing:0.133px;">Test</span><span class="t" style="left:140.91px;top:273.80px;font-size:27px;color:#fff;letter-spacing:0.624px;">Settings</span><span class="t" style="left:277.91px;top:273.80px;font-size:27px;color:#7d818c;letter-spacing:0.974px;">Inputs</span><span class="t" style="left:391.91px;top:273.80px;font-size:27px;color:#7d818c;letter-spacing:1.145px;">Outputs</span><span class="t" style="left:150.93px;top:369.80px;font-size:28.8px;color:#fff;font-weight:700;letter-spacing:1.060px;-webkit-text-stroke:0.25px #fff;">Command Name</span><span class="t" style="left:150.93px;top:553.30px;font-size:28.8px;color:#fff;font-weight:700;letter-spacing:0.543px;-webkit-text-stroke:0.25px #fff;">Command Description</span><span class="t" style="left:150.93px;top:747.90px;font-size:28.8px;color:#fff;font-weight:700;letter-spacing:0.892px;-webkit-text-stroke:0.25px #fff;">Webhook Authentication</span><span class="t" style="left:150.93px;top:1078.20px;font-size:28.8px;color:#fff;font-weight:700;letter-spacing:1.191px;-webkit-text-stroke:0.25px #fff;">Implementation</span><span class="t" style="left:150.93px;top:1223.90px;font-size:28.8px;color:#fff;font-weight:700;letter-spacing:0.695px;-webkit-text-stroke:0.25px #fff;">Default Connection</span><span class="t" style="left:150.93px;top:1369.60px;font-size:28.8px;color:#fff;font-weight:700;letter-spacing:-0.513px;-webkit-text-stroke:0.25px #fff;">Role Access</span><span class="t" style="left:150.93px;top:1622.40px;font-size:28.8px;color:#fff;font-weight:700;letter-spacing:0.192px;-webkit-text-stroke:0.25px #fff;">Features</span><span class="t" style="left:150.93px;top:2007.30px;font-size:28.8px;color:#fff;font-weight:700;letter-spacing:-0.169px;-webkit-text-stroke:0.25px #fff;">Schedules</span><span class="t" style="left:161.67px;top:432.05px;font-size:25.5px;color:#6f737e;letter-spacing:-0.046px;">Initiate Scan</span><span class="t" style="left:159.57px;top:482.40px;font-size:23px;color:#c5c7cc;letter-spacing:0.332px;">initiateScan</span><span class="t" style="left:163.31px;top:621.25px;font-size:24.5px;color:#8a8e98;letter-spacing:0.545px;">Initiates a Full Disk Scan on Agents that match the specified</span><span class="t" style="left:163.31px;top:651.25px;font-size:24.5px;color:#8a8e98;letter-spacing:0.501px;">filters. Full Disk Scan finds dormant suspicious activity,</span><span class="t" style="left:163.31px;top:680.95px;font-size:24.5px;color:#8a8e98;letter-spacing:0.594px;clip-path:inset(0 0 1.5px 0);">threats, and compliance violations in the local file system,</span><span class="t" style="left:177.37px;top:822.75px;font-size:25.5px;color:#858993;letter-spacing:-0.708px;">API Key</span><span class="t" style="left:177.55px;top:865.70px;font-size:21px;color:#696d78;letter-spacing:0.433px;">Manage and generate the API keys used for webhook</span><span class="t" style="left:177.37px;top:954.05px;font-size:25.5px;color:#858993;letter-spacing:-0.548px;">JSON Web Token (JWT)</span><span class="t" style="left:177.55px;top:997.90px;font-size:21px;color:#696d78;letter-spacing:0.385px;">Manage secret keys and configure JWT authentication</span><span class="t" style="left:169.41px;top:1145.30px;font-size:27px;color:#787c87;letter-spacing:0.774px;">Python</span><span class="t" style="left:169.41px;top:1291.90px;font-size:27px;color:#d6d7da;letter-spacing:0.325px;">Select a connection</span><span class="t" style="left:151.51px;top:1435.25px;font-size:24.5px;color:#90918f;letter-spacing:0.535px;">Choose access level for the command. Only roles with</span><span class="t" style="left:151.51px;top:1464.15px;font-size:24.5px;color:#90918f;letter-spacing:0.562px;">Privileged Commands settings can set and use privileged</span><span class="t" style="left:151.51px;top:1493.05px;font-size:24.5px;color:#90918f;letter-spacing:0.883px;">commands.</span><span class="t" style="left:191.01px;top:1554.15px;font-size:24.5px;color:#c4c8d6;letter-spacing:0.590px;">Privileged</span><span class="t" style="left:151.51px;top:1674.75px;font-size:24.5px;color:#90918f;letter-spacing:0.715px;">Select where you want to use this command within the D3</span><span class="t" style="left:151.51px;top:1704.45px;font-size:24.5px;color:#90918f;letter-spacing:0.887px;">application.</span><span class="t" style="left:191.01px;top:1746.75px;font-size:24.5px;color:#cfd2dc;letter-spacing:0.494px;">Command Task</span><span class="t" style="left:191.01px;top:1794.75px;font-size:24.5px;color:#cfd2dc;letter-spacing:0.592px;">Conditional Task</span><span class="t" style="left:191.01px;top:1842.75px;font-size:24.5px;color:#cfd2dc;letter-spacing:0.666px;">Transform Command</span><span class="t" style="left:191.01px;top:1890.75px;font-size:24.5px;color:#cfd2dc;letter-spacing:1.081px;">Ad-hoc Command</span><span class="t" style="left:191.01px;top:1938.75px;font-size:24.5px;color:#cfd2dc;letter-spacing:0.993px;">Allow command to be run on agent</span><span class="t" style="left:151.51px;top:2064.25px;font-size:24.5px;color:#90918f;letter-spacing:0.715px;">Set up a schedule for this Command to run periodically.</span><span class="t" style="left:209.31px;top:2130.50px;font-size:27px;color:#fff;letter-spacing:0.329px;clip-path:inset(0 0 7.7px 0);">New Schedule</span><span class="t" style="left:786.71px;top:2128.10px;font-size:27px;color:#9ecbff;letter-spacing:-1.403px;clip-path:inset(0 0 5.3px 0);">Refresh</span><span class="t" style="left:987.41px;top:215.30px;font-size:27px;color:#a6a8ae;letter-spacing:-1.072px;">Save</span><span class="t" style="left:1132.51px;top:215.30px;font-size:27px;color:#a6a8ae;letter-spacing:1.361px;">Undo</span><span class="t" style="left:1312.41px;top:216.55px;font-size:24.5px;color:#fff;letter-spacing:0.686px;">System commands are view only. To make change to the code, clone the command and edit it in the new command.</span>
</body></html>
